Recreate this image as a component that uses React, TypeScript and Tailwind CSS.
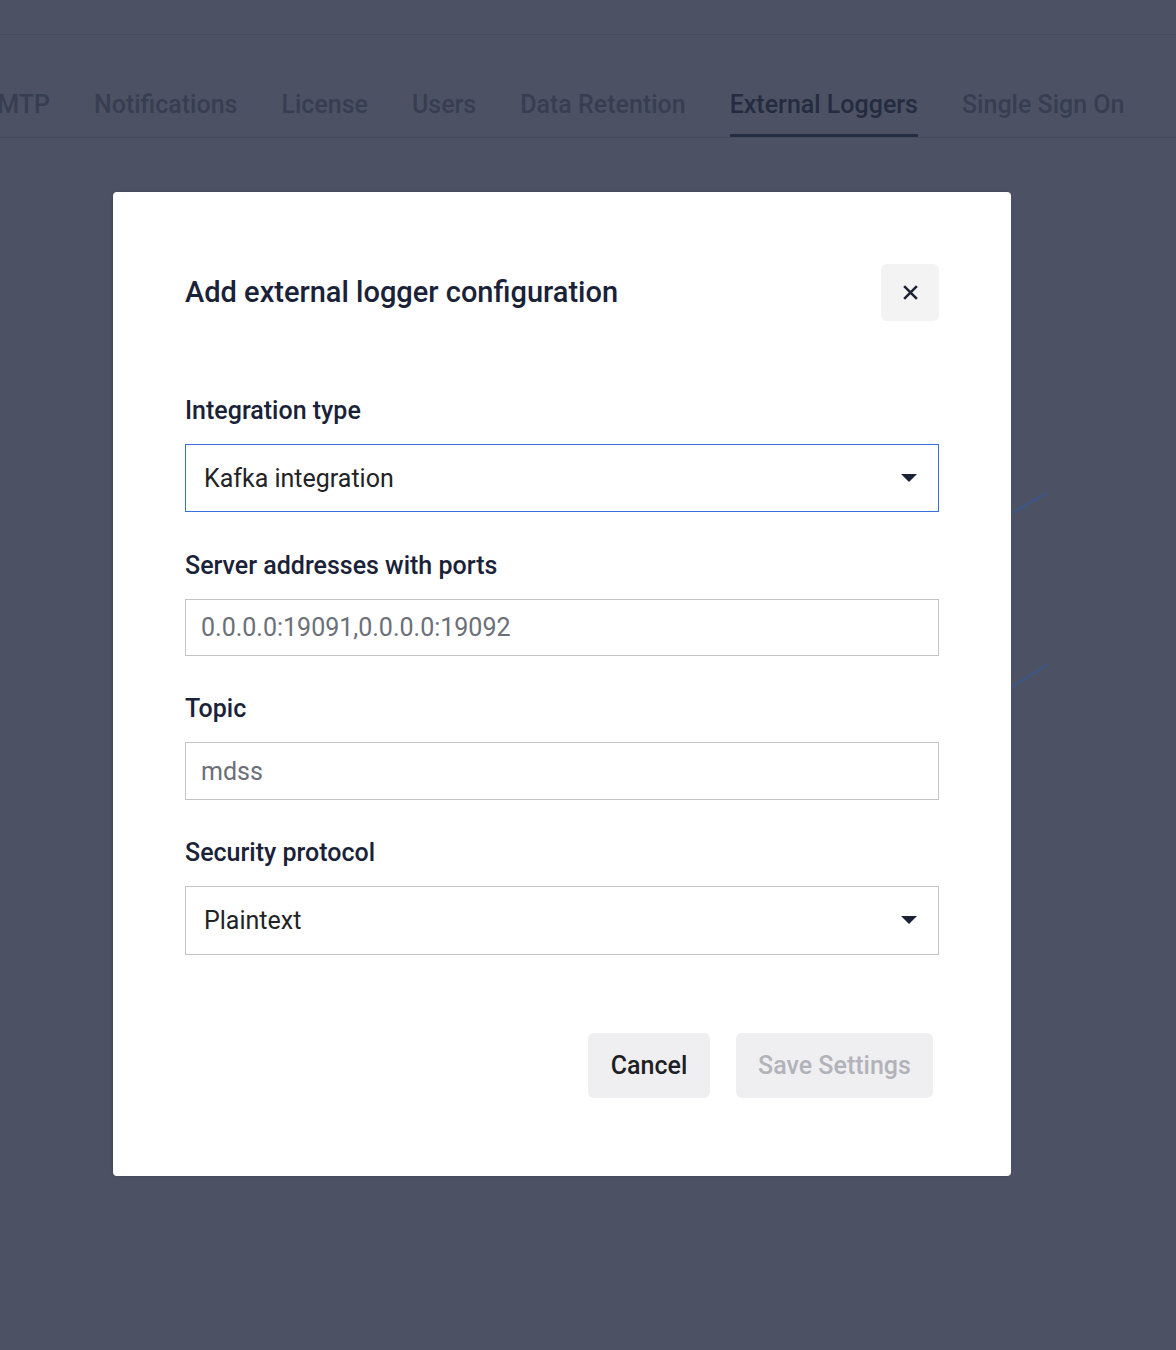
import React from "react"

const tabs = [
  { label: "Notifications", active: false },
  { label: "License", active: false },
  { label: "Users", active: false },
  { label: "Data Retention", active: false },
  { label: "External Loggers", active: true },
  { label: "Single Sign On", active: false },
]

const tabBase =
  "flex h-full flex-col justify-end border-b-[3px] pb-[17px] text-[25px] font-medium leading-none whitespace-nowrap"

const Caret = () => (
  <svg width="16" height="9" viewBox="0 0 16 9" className="shrink-0">
    <path d="M0 0 H16 L8 8 Z" fill="#1b2236" />
  </svg>
)

const Label = ({ children }: { children: React.ReactNode }) => (
  <label className="block text-[25px] font-medium leading-none text-[#1a2238]">
    {children}
  </label>
)

const App = () => {
  return (
    <div
      className="relative min-h-[1350px] w-full overflow-hidden bg-[#4c5263]"
      style={{ fontFamily: "Roboto, 'Noto Sans', sans-serif" }}
    >
      {/* page behind the overlay */}
      <div className="h-[35px] border-b border-[#464c5c]" />
      <div className="flex h-[103px] items-end gap-[44px] border-b border-[#464c5c]">
        <div className={tabBase + " w-[50px] items-end border-transparent text-[#373e52]"}>
          SMTP
        </div>
        {tabs.map((t) => (
          <div
            key={t.label}
            className={
              t.active
                ? tabBase + " border-[#252d42] text-[#252c41]"
                : tabBase + " border-transparent text-[#373e52]"
            }
          >
            {t.label}
          </div>
        ))}
      </div>

      <svg
        className="absolute left-[1000px] top-[480px]"
        width="60"
        height="220"
        viewBox="0 0 60 220"
      >
        <path d="M0 40 L47 13" stroke="#3e5684" strokeWidth="2.5" fill="none" />
        <path d="M0 214 L47 185" stroke="#3e5684" strokeWidth="2.5" fill="none" />
      </svg>

      {/* modal */}
      <div className="absolute left-[113px] top-[192px] w-[898px] h-[984px] rounded-[4px] bg-white px-[72px] pt-[72px] shadow-[-1px_0_2px_rgba(0,0,0,0.15)]">
        <div className="flex items-center justify-between">
          <h2 className="text-[29px] font-medium leading-none text-[#1a2238]">
            Add external logger configuration
          </h2>
          <button className="flex h-[57px] w-[58px] items-center justify-center rounded-[6px] bg-[#f3f3f4]">
            <svg width="17" height="17" viewBox="0 0 16 16">
              <path
                d="M2 2 L14 14 M14 2 L2 14"
                stroke="#1b2236"
                strokeWidth="2.4"
                strokeLinecap="butt"
              />
            </svg>
          </button>
        </div>

        <div className="mt-[77px]">
          <Label>Integration type</Label>
          <div className="mt-[21px] flex h-[68px] items-center justify-between border border-[#3a6fe0] pl-[18px] pr-[21px]">
            <span className="text-[25px] leading-none text-[#222326]">Kafka integration</span>
            <Caret />
          </div>
        </div>

        <div className="mt-[41px]">
          <Label>Server addresses with ports</Label>
          <div className="mt-[21px] flex h-[57px] items-center border border-[#c4c4c4] pl-[15px]">
            <span className="text-[25px] leading-none text-[#6b6f78]">0.0.0.0:19091,0.0.0.0:19092</span>
          </div>
        </div>

        <div className="mt-[40px]">
          <Label>Topic</Label>
          <div className="mt-[21px] flex h-[58px] items-center border border-[#c4c4c4] pl-[15px]">
            <span className="text-[25px] leading-none text-[#6b6f78]">mdss</span>
          </div>
        </div>

        <div className="mt-[40px]">
          <Label>Security protocol</Label>
          <div className="mt-[21px] flex h-[69px] items-center justify-between border border-[#c4c4c4] pl-[18px] pr-[21px]">
            <span className="text-[25px] leading-none text-[#222326]">Plaintext</span>
            <Caret />
          </div>
        </div>

        <div className="mt-[78px] flex justify-end gap-[26px] pr-[6px]">
          <button className="h-[65px] w-[122px] rounded-[6px] bg-[#efeff1] text-[25px] font-medium text-[#1d1f24]">
            Cancel
          </button>
          <button className="h-[65px] w-[197px] rounded-[6px] bg-[#efeff1] text-[25px] font-medium text-[#b2b3ba]">
            Save Settings
          </button>
        </div>
      </div>
    </div>
  )
}

export default App
